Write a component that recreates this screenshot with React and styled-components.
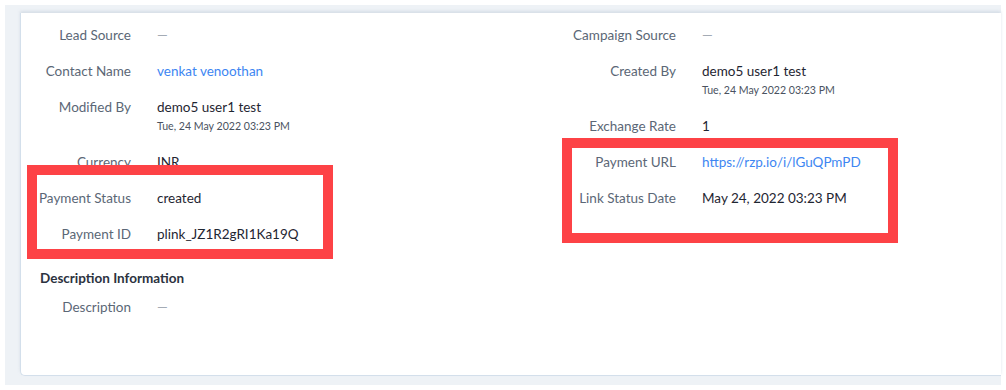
import React from "react";
import styled, { createGlobalStyle } from "styled-components";

const GlobalStyle = createGlobalStyle`
	html, body {
		margin: 0;
		padding: 0;
		background: #ffffff;
		font-family: Lato, "Open Sans", Arial, sans-serif;
		-webkit-font-smoothing: antialiased;
	}
`;

const Page = styled.div`
	position: relative;
	margin: 5px;
	width: 996px;
	height: 380px;
	box-sizing: border-box;
	background: #eef2f6;
	padding: 8px 0 9px 15px;
	display: flex;
`;

const Card = styled.div`
	flex: 1;
	background: #ffffff;
	border-left: 1px solid #d3dfeb;
	border-bottom: 1px solid #d3dfeb;
	border-bottom-left-radius: 5px;
	box-shadow: 0 -2px 3px rgba(200, 210, 222, 0.6);
	padding-top: 4px;
	display: flex;
	flex-direction: column;
`;

const Columns = styled.div`
	display: grid;
	grid-template-columns: 545px 1fr;
`;

const Column = styled.div`
	display: flex;
	flex-direction: column;
`;

const Row = styled.div`
	display: grid;
	grid-template-columns: 110px 1fr;
	column-gap: 26px;
	padding: 9px 0;
	font-size: 13.5px;
	line-height: 18px;
`;

const Label = styled.div`
	text-align: right;
	color: #5b6776;
	white-space: nowrap;
`;

const Value = styled.div`
	color: ${(props) =>
		props.type === "link" ? "#3d86f2" : props.type === "empty" ? "#a4abb5" : "#1f2632"};
	white-space: nowrap;
`;

const SubText = styled.div`
	font-size: 10.6px;
	line-height: 18px;
	margin-top: 1px;
	color: #4a5260;
`;

const SectionTitle = styled.h3`
	margin: 17px 0 2px 19px;
	font-size: 13.5px;
	line-height: 18px;
	font-weight: 700;
	color: #2b3240;
`;

const Highlight = styled.div`
	position: absolute;
	left: ${(props) => props.x}px;
	top: ${(props) => props.y}px;
	width: ${(props) => props.w}px;
	height: ${(props) => props.h}px;
	box-sizing: border-box;
	border: 10px solid #fd4246;
	pointer-events: none;
`;

const leftFields = [
	{ label: "Lead Source", value: "—", type: "empty" },
	{ label: "Contact Name", value: "venkat venoothan", type: "link" },
	{ label: "Modified By", value: "demo5 user1 test", sub: "Tue, 24 May 2022 03:23 PM" },
	{ label: "Currency", value: "INR" },
	{ label: "Payment Status", value: "created" },
	{ label: "Payment ID", value: "plink_JZ1R2gRI1Ka19Q" },
];

const rightFields = [
	{ label: "Campaign Source", value: "—", type: "empty" },
	{ label: "Created By", value: "demo5 user1 test", sub: "Tue, 24 May 2022 03:23 PM" },
	{ label: "Exchange Rate", value: "1" },
	{ label: "Payment URL", value: "https://rzp.io/i/lGuQPmPD", type: "link" },
	{ label: "Link Status Date", value: "May 24, 2022 03:23 PM" },
];

function Field({ field }) {
	return (
		<Row>
			<Label>{field.label}</Label>
			<div>
				<Value type={field.type}>{field.value}</Value>
				{field.sub && <SubText>{field.sub}</SubText>}
			</div>
		</Row>
	);
}

function App() {
	return (
		<>
			<GlobalStyle />
			<Page>
				<Card>
					<Columns>
						<Column>
							{leftFields.map((f) => (
								<Field key={f.label} field={f} />
							))}
						</Column>
						<Column>
							{rightFields.map((f) => (
								<Field key={f.label} field={f} />
							))}
						</Column>
					</Columns>
					<SectionTitle>Description Information</SectionTitle>
					<Field field={{ label: "Description", value: "—", type: "empty" }} />
				</Card>
				<Highlight x={22} y={160} w={306} h={94} />
				<Highlight x={557} y={133} w={336} h={105} />
			</Page>
		</>
	);
}

export default App;
